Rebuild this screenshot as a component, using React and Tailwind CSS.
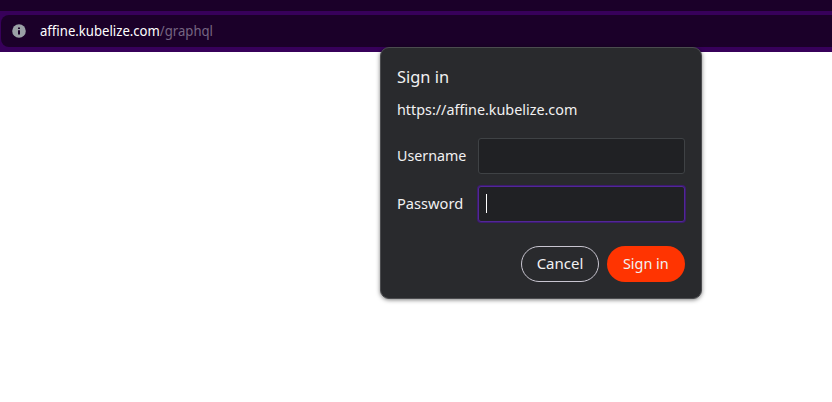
function InfoIcon() {
  return (
    <svg className="h-[14px] w-[14px] shrink-0" viewBox="0 0 14 14">
      <circle cx="7" cy="7" r="6.8" fill="#9aa0a6" />
      <path d="M6 3.6h2v1.4H6zM6 6.2h2v4.2H6z" fill="#1b0029" />
    </svg>
  );
}

function AddressBar() {
  return (
    <header className="bg-[#1b0029] pt-[11px]">
      <div className="h-[41px] bg-[#37005a] pt-1 pl-px">
        <div className="flex h-8 items-center rounded-l-lg bg-[#1b0029] pl-[11px]">
          <InfoIcon />
          <span className="ml-[14px] origin-left scale-x-[0.938] text-[14px] leading-5 whitespace-nowrap text-white">
            affine.kubelize.com<span className="text-[#766682]">/graphql</span>
          </span>
        </div>
      </div>
    </header>
  );
}

function SignInDialog() {
  return (
    <section className="absolute top-[47px] left-[380px] h-[252px] w-[322px] rounded-[9px] border border-[#4b4c4f] bg-[#292a2d] px-4 text-[15px] text-[#f1f1f2] shadow-[0_1px_4px_rgba(0,0,0,0.5)]">
      <h1 className="mt-[17px] origin-left scale-x-[0.965] text-[17px] leading-6">Sign in</h1>
      <p className="mt-[10px] origin-left scale-x-[0.956] leading-5">https://affine.kubelize.com</p>
      <div className="mt-[19px] grid grid-cols-[81px_207px] items-center gap-y-3">
        <span className="origin-left scale-x-[0.95] pb-0.5 leading-5">Username</span>
        <div className="h-9 rounded-[3px] border border-[#3f4245] bg-[#202124]" />
        <span className="origin-left scale-x-[0.975] pb-0.5 leading-5">Password</span>
        <div className="flex h-9 items-center rounded-[3px] border border-[#522797] bg-[#202124] pl-[7px] shadow-[0_0_0_1px_#3c1b70]">
          <div className="-mt-0.5 h-[19px] w-px bg-white" />
        </div>
      </div>
      <div className="mt-6 flex justify-end gap-2">
        <button className="h-9 w-[78px] rounded-full border border-[#c8c5d0] pb-0.5 leading-5">
          Cancel
        </button>
        <button className="h-9 w-[78px] rounded-full bg-[#ff3401] pb-0.5 leading-5">
          <span className="inline-block scale-x-[0.96]">Sign in</span>
        </button>
      </div>
    </section>
  );
}

export default function App() {
  return (
    <main className="relative h-[402px] w-[832px] overflow-hidden bg-white font-['Noto_Sans',sans-serif]">
      <AddressBar />
      <SignInDialog />
    </main>
  );
}
